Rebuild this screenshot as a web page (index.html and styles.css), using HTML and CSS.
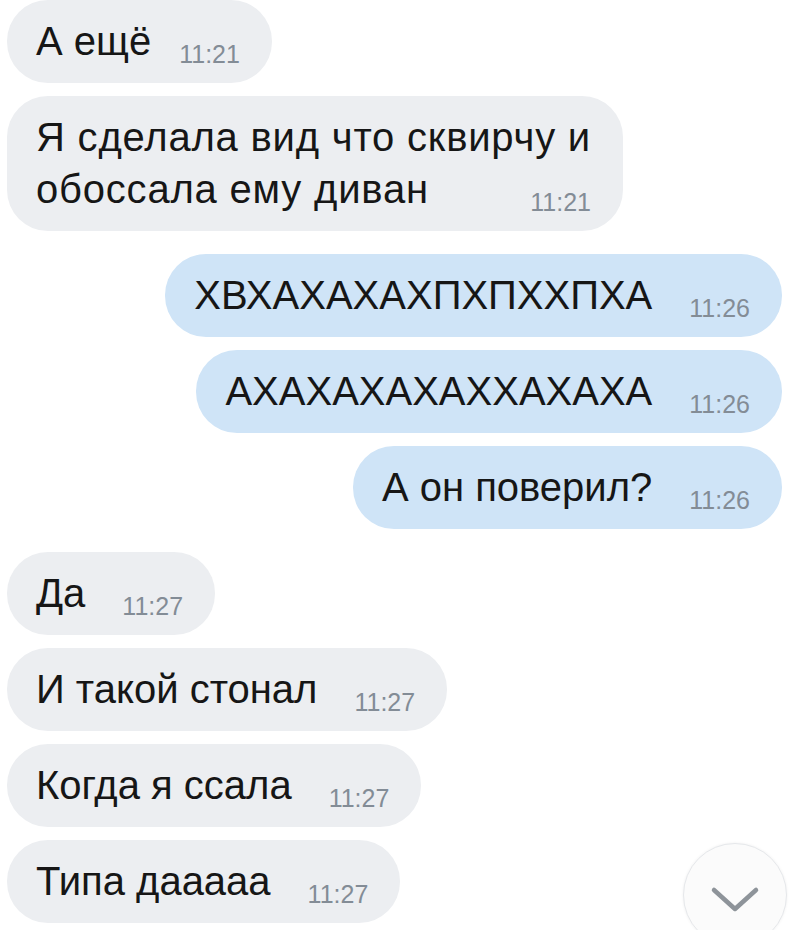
FILE: index.html
```html
<!DOCTYPE html>
<html>
<head>
    <meta charset="utf-8">
    <title>Чат</title>
    <link rel="stylesheet" href="styles.css">
</head>
<body>
    <div id="chat">
        <div class="msg in short"><span class="time">11:21</span>А ещё</div>
        <div class="msg in wide">Я сделала вид что сквирчу и<br><span class="time">11:21</span>обоссала ему диван</div>

        <div class="msg out first"><span class="time">11:26</span>ХВХАХАХАХПХПХХПХА</div>
        <div class="msg out"><span class="time">11:26</span>АХАХАХАХАХХАХАХА</div>
        <div class="msg out"><span class="time">11:26</span>А он поверил?</div>

        <div class="msg in first"><span class="time">11:27</span>Да</div>
        <div class="msg in"><span class="time">11:27</span>И такой стонал</div>
        <div class="msg in"><span class="time">11:27</span>Когда я ссала</div>
        <div class="msg in"><span class="time">11:27</span>Типа дааааа</div>
    </div>

    <div id="scrolldown">
        <svg width="104" height="104" viewBox="0 0 104 104">
            <polyline points="31,47 52,66 73,47" fill="none" stroke="#8e949a" stroke-width="4.5" stroke-linecap="round" stroke-linejoin="round"/>
        </svg>
    </div>
</body>
</html>
```

FILE: styles.css
```css
html, body{
    margin: 0;
    height: 100%;
    overflow: hidden;
    background: #fff;
}
body{
    position: relative;
    font-family: "Liberation Sans", Arial, sans-serif;
}
#chat{
    display: flex;
    flex-direction: column;
    gap: 13px;
    padding: 0 8px 0 7px;
}
.msg{
    padding: 15px 32px 16px 29px;
    border-radius: 41px;
    font-size: 40px;
    line-height: 52px;
    color: #161616;
}
.msg.first{
    margin-top: 10px;
}
.msg.wide{
    letter-spacing: 0.8px;
}
.in{
    align-self: flex-start;
    background-color: #eceef1;
}
.out{
    align-self: flex-end;
    background-color: #cfe4f7;
}
.time{
    float: right;
    margin: 27px 0 0 37px;
    font-size: 25px;
    line-height: 25px;
    letter-spacing: 0;
    color: #838c96;
}
.short .time{
    margin-left: 28px;
}
#scrolldown{
    position: absolute;
    left: 683px;
    top: 843px;
    width: 104px;
    height: 104px;
    border-radius: 50%;
    background: #fbfbfb;
    border: 1px solid #e6e8eb;
    box-sizing: border-box;
    box-shadow: 0 0 3px rgba(0,0,0,0.06);
}
#scrolldown svg{
    display: block;
    margin: -1px;
}
```
